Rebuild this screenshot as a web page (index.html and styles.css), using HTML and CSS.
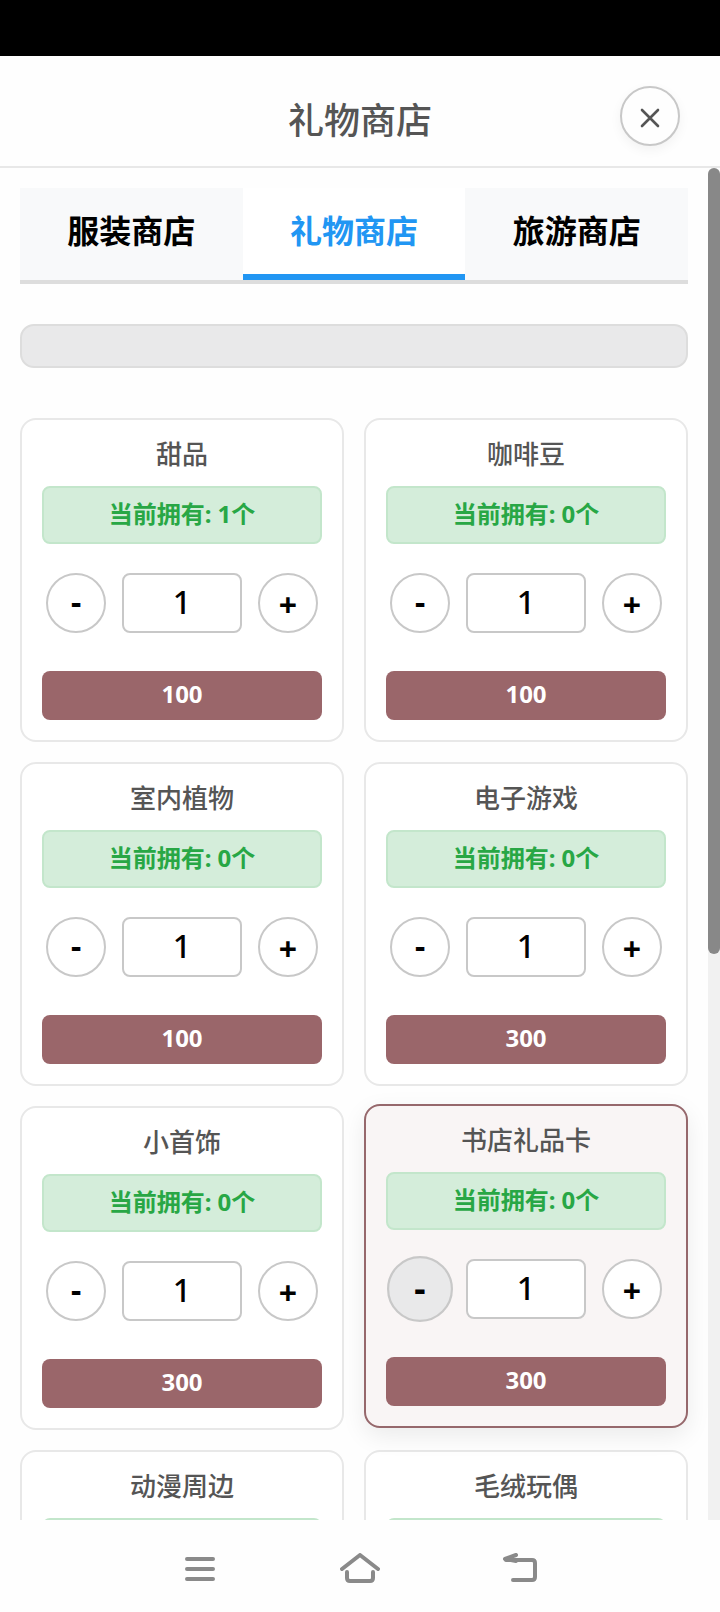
FILE: index.html
```html
<!DOCTYPE html>
<html lang="zh-CN">
<head>
<meta charset="utf-8">
<title>礼物商店</title>
<link rel="stylesheet" href="styles.css">
</head>
<body>
<div class="status-bar"></div>
<header class="header">
  <h1 class="header-title">礼物商店</h1>
  <button class="close-btn" aria-label="关闭">
    <svg class="close-icon" viewBox="0 0 20 20"><path d="M2 2 L18 18 M18 2 L2 18"/></svg>
  </button>
</header>
<main class="viewport">
  <div class="content">
    <nav class="tabs">
      <div class="tab">服装商店</div>
      <div class="tab tab-active">礼物商店</div>
      <div class="tab">旅游商店</div>
    </nav>
    <div class="search"></div>
    <section class="grid">
      <article class="card">
        <h2 class="card-title">甜品</h2>
        <div class="owned">当前拥有: 1个</div>
        <div class="qty"><button class="round minus">-</button><div class="qty-value">1</div><button class="round plus">+</button></div>
        <button class="buy">100</button>
      </article>
      <article class="card">
        <h2 class="card-title">咖啡豆</h2>
        <div class="owned">当前拥有: 0个</div>
        <div class="qty"><button class="round minus">-</button><div class="qty-value">1</div><button class="round plus">+</button></div>
        <button class="buy">100</button>
      </article>
      <article class="card">
        <h2 class="card-title">室内植物</h2>
        <div class="owned">当前拥有: 0个</div>
        <div class="qty"><button class="round minus">-</button><div class="qty-value">1</div><button class="round plus">+</button></div>
        <button class="buy">100</button>
      </article>
      <article class="card">
        <h2 class="card-title">电子游戏</h2>
        <div class="owned">当前拥有: 0个</div>
        <div class="qty"><button class="round minus">-</button><div class="qty-value">1</div><button class="round plus">+</button></div>
        <button class="buy">300</button>
      </article>
      <article class="card">
        <h2 class="card-title">小首饰</h2>
        <div class="owned">当前拥有: 0个</div>
        <div class="qty"><button class="round minus">-</button><div class="qty-value">1</div><button class="round plus">+</button></div>
        <button class="buy">300</button>
      </article>
      <article class="card card-hover">
        <h2 class="card-title">书店礼品卡</h2>
        <div class="owned">当前拥有: 0个</div>
        <div class="qty"><button class="round minus minus-pressed">-</button><div class="qty-value">1</div><button class="round plus">+</button></div>
        <button class="buy">300</button>
      </article>
      <article class="card">
        <h2 class="card-title">动漫周边</h2>
        <div class="owned"></div>
      </article>
      <article class="card">
        <h2 class="card-title">毛绒玩偶</h2>
        <div class="owned"></div>
      </article>
    </section>
  </div>
  <div class="scrollbar"><div class="scrollbar-thumb"></div></div>
</main>
<footer class="sysnav">
  <svg class="nav-icon" width="30" height="28" viewBox="0 0 30 28"><path d="M2 4 H28 M2 14 H28 M2 24 H28"/></svg>
  <svg class="nav-icon" width="40" height="32" viewBox="0 0 40 32"><path d="M2 16 L20 2 L38 16"/><path d="M7 19 V25 Q7 28 10 28 H30 Q33 28 33 25 V19"/></svg>
  <svg class="nav-icon" width="36" height="32" viewBox="0 0 36 32"><path d="M14 2 L3 6 L14 8"/><path d="M4 7 H30 Q33 7 33 10 V24 Q33 27 30 27 H11"/></svg>
</footer>
</body>
</html>
```

FILE: styles.css
```css
* { box-sizing: border-box; }
html, body { margin: 0; padding: 0; }
body {
  width: 720px;
  height: 1612px;
  display: flex;
  flex-direction: column;
  overflow: hidden;
  background: #fefefe;
  font-family: "Noto Sans", "Noto Sans CJK SC", sans-serif;
}
.status-bar { flex: 0 0 56px; background: #000; }
.header {
  flex: 0 0 112px;
  display: flex;
  align-items: center;
  justify-content: center;
  position: relative;
  border-bottom: 2px solid #e8e8e8;
  background: #fefefe;
}
.header-title {
  margin: 19px 0 0;
  font-size: 36px;
  line-height: 48px;
  font-weight: 500;
  color: #555;
}
.close-btn {
  position: absolute;
  top: 30px;
  left: 620px;
  width: 60px;
  height: 60px;
  padding: 0;
  display: flex;
  align-items: center;
  justify-content: center;
  background: #fefefe;
  border: 2px solid #c8c8c8;
  border-radius: 50%;
  box-shadow: 0 4px 12px rgba(0, 0, 0, 0.05);
}
.close-icon { width: 20px; height: 20px; margin-top: 3px; fill: none; stroke: #555; stroke-width: 2.6; stroke-linecap: round; }
.viewport { flex: 1 1 0; min-height: 0; display: flex; overflow: hidden; }
.content { flex: 1 1 0; min-width: 0; padding: 20px 20px 0; }
.scrollbar { flex: 0 0 12px; background: #f1f1f1; border-radius: 6px 6px 0 0; }
.scrollbar-thumb { height: 786px; background: #888; border-radius: 6px; }
.tabs { display: flex; height: 96px; border-bottom: 4px solid #ddd; }
.tab {
  flex: 1 1 0;
  display: flex;
  align-items: center;
  justify-content: center;
  padding-bottom: 4px;
  background: #f8f9fa;
  color: #000;
  font-size: 32px;
  font-weight: 700;
  border-bottom: 6px solid transparent;
}
.tab-active { background: #fff; color: #2196f3; border-bottom-color: #2196f3; }
.search {
  height: 44px;
  margin: 40px 0 50px;
  background: #e9e9ea;
  border: 2px solid #ddd;
  border-radius: 14px;
}
.grid { display: grid; grid-template-columns: 1fr 1fr; gap: 20px; }
.card {
  height: 324px;
  padding: 20px;
  background: #fff;
  border: 2px solid #e8e8e8;
  border-radius: 16px;
  display: flex;
  flex-direction: column;
}
.card-hover {
  transform: translateY(-2px);
  background: #f9f5f5;
  border-color: #96686c;
  box-shadow: 0 8px 24px rgba(0, 0, 0, 0.08);
}
.card-title {
  margin: -2px 0 16px;
  height: 32px;
  line-height: 32px;
  text-align: center;
  font-size: 26px;
  font-weight: 500;
  color: #555;
}
.owned {
  height: 58px;
  margin-bottom: 29px;
  flex: 0 0 auto;
  display: flex;
  align-items: center;
  justify-content: center;
  padding-bottom: 5px;
  background: #d4edda;
  border: 2px solid #c3e6cb;
  border-radius: 8px;
  color: #28a745;
  font-size: 24px;
  font-weight: 700;
}
.qty { height: 60px; margin-bottom: 38px; display: flex; justify-content: center; align-items: center; gap: 16px; }
.round {
  width: 60px;
  height: 60px;
  padding: 0;
  background: #fff;
  border: 2px solid #c8c8c8;
  border-radius: 50%;
  color: #000;
  font-family: inherit;
  font-size: 32px;
  font-weight: 700;
  line-height: 1;
}
.plus { padding-top: 3px; }
.minus { padding-bottom: 2px; }
.minus-pressed { background: #e9e9ea; transform: scale(1.1); }
.qty-value {
  width: 120px;
  height: 60px;
  display: flex;
  align-items: center;
  justify-content: center;
  padding-bottom: 4px;
  background: #fff;
  border: 2px solid #c8c8c8;
  border-radius: 8px;
  color: #000;
  font-size: 32px;
  font-weight: 500;
}
.buy {
  height: 49px;
  padding: 0 0 4px;
  background: #9a666a;
  border: 0;
  border-radius: 8px;
  color: #fff;
  font-family: inherit;
  font-size: 24px;
  font-weight: 700;
}
.sysnav {
  flex: 0 0 92px;
  display: grid;
  grid-template-columns: repeat(3, 160px);
  justify-content: center;
  justify-items: center;
  align-items: center;
  align-content: start;
  padding-top: 33px;
  background: #fefefe;
}
.nav-icon { fill: none; stroke: #8a8a8a; stroke-width: 4; stroke-linecap: round; stroke-linejoin: round; }
```
